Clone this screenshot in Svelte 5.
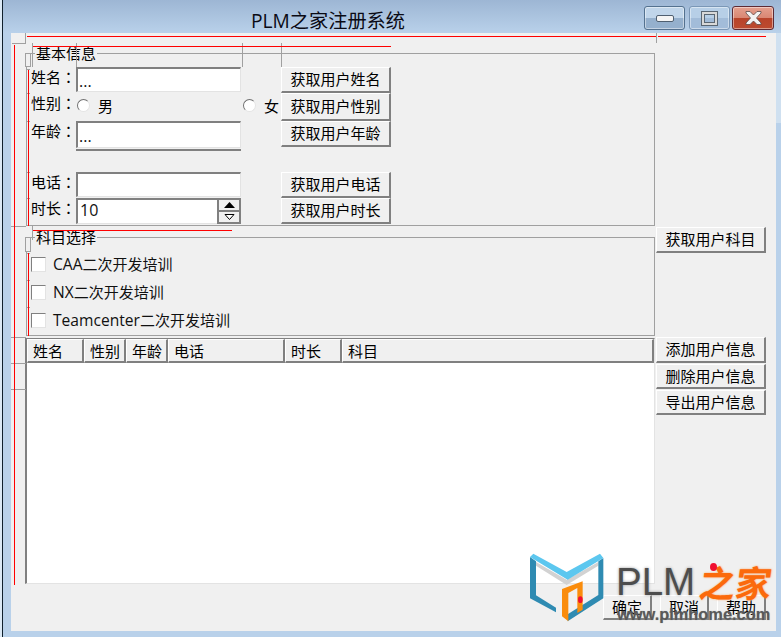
<script lang="ts">
	const nameColumns = [
		{ label: '姓名', width: 57 },
		{ label: '性别', width: 42 },
		{ label: '年龄', width: 42 },
		{ label: '电话', width: 117 },
		{ label: '时长', width: 57 },
		{ label: '科目', width: 312 }
	];
	const courses = ['CAA', 'NX', 'Teamcenter'];

	// designer annotations drawn on top of the form: [x1, y1, x2, y2]
	const redLines = [
		[27, 36.5, 656, 36.5],
		[658, 36.5, 766, 36.5],
		[33, 46.5, 391, 46.5],
		[14.5, 45, 14.5, 585],
		[28.5, 70, 28.5, 226],
		[33, 230.5, 232, 230.5],
		[28.5, 253, 28.5, 336]
	];
	const grayLines = [
		[32.5, 43, 32.5, 67],
		[76.5, 43, 76.5, 67],
		[242.5, 43, 242.5, 67],
		[281.5, 43, 281.5, 67],
		[656.5, 33, 656.5, 43],
		[32.5, 226, 32.5, 240],
		[26, 69.5, 30, 69.5],
		[26, 93.5, 30, 93.5],
		[26, 121.5, 30, 121.5],
		[26, 172.5, 30, 172.5],
		[26, 198.5, 30, 198.5],
		[26, 253.5, 30, 253.5],
		[26, 280.5, 30, 280.5],
		[26, 307.5, 30, 307.5],
		[11, 226.5, 26, 226.5],
		[11, 337.5, 26, 337.5],
		[11, 363.5, 26, 363.5],
		[11, 389.5, 26, 389.5]
	];
</script>

<div class="window">
	<header class="titlebar">
		<h1>PLM之家注册系统</h1>
		<div class="controls">
			<div class="ctl">
				<svg width="18" height="7" viewBox="0 0 18 7"><rect x="0.5" y="0.5" width="17" height="6" rx="1.5" fill="#f4f4f4" stroke="#4f5f70" /></svg>
			</div>
			<div class="ctl faded">
				<svg width="17" height="15" viewBox="0 0 17 15"><rect x="1.5" y="1.5" width="14" height="12" fill="none" stroke="#d8d8d8" stroke-width="3" /><rect x="0.5" y="0.5" width="16" height="14" fill="none" stroke="#5a6672" /><rect x="3.5" y="3.5" width="10" height="8" fill="none" stroke="#5a6672" /></svg>
			</div>
			<div class="ctl close">
				<svg width="19" height="16" viewBox="0 0 19 16"><path d="M2 1.5h4l3.5 3.5L13 1.5h4v1.5L12.5 8 17 13v1.5h-4L9.500 11 6 14.500H2V13l4.500-5L2 3z" fill="#f2f2f2" stroke="#5c4a48" stroke-width="0.8" /></svg>
			</div>
		</div>
	</header>

	<main class="client">
		<div class="body">
			<div class="left">
				<section class="group basic">
					<span class="legend">基本信息</span>
					<div class="form">
						<span class="lbl">姓名<span class="colon">：</span></span>
						<input class="field" value="..." readonly />
						<span></span>
						<button class="btn">获取用户姓名</button>

						<span class="lbl">性别<span class="colon">：</span></span>
						<label class="radio"><i></i>男</label>
						<label class="radio second"><i></i>女</label>
						<button class="btn tall">获取用户性别</button>

						<span class="lbl">年龄<span class="colon">：</span></span>
						<div class="age"><input class="field" value="..." readonly /></div>
						<span></span>
						<button class="btn">获取用户年龄</button>

						<span class="lbl">电话<span class="colon">：</span></span>
						<input class="field" readonly />
						<span></span>
						<button class="btn">获取用户电话</button>

						<span class="lbl">时长<span class="colon">：</span></span>
						<div class="spin">
							<input class="field" value="10" readonly />
							<div class="arrows">
								<b><svg width="11" height="6" viewBox="0 0 11 6"><path d="M5.500 0L11 6H0z" fill="#000" /></svg></b>
								<b><svg width="11" height="6" viewBox="0 0 11 6"><path d="M1 0.500h9L5.500 5.500z" fill="#fff" stroke="#000" /></svg></b>
							</div>
						</div>
						<span></span>
						<button class="btn">获取用户时长</button>
					</div>
				</section>

				<section class="group courses">
					<span class="legend">科目选择</span>
					{#each courses as course}
						<label class="check"><i></i><span class="check-text"><span class="latin">{course}</span>二次开发培训</span></label>
					{/each}
				</section>

				<div class="table">
					<div class="thead">
						{#each nameColumns as col}
							<div class="th" style={`width: ${col.width}px;`}>{col.label}</div>
						{/each}
					</div>
				</div>
			</div>

			<aside class="side">
				<button class="btn subject">获取用户科目</button>
				<button class="btn">添加用户信息</button>
				<button class="btn short">删除用户信息</button>
				<button class="btn short">导出用户信息</button>
			</aside>
		</div>

		<footer class="actions">
			<button class="btn">确定</button>
			<button class="btn">取消</button>
			<button class="btn">帮助</button>
		</footer>
	</main>

	<svg class="marks" width="781" height="637" viewBox="0 0 781 637" shape-rendering="crispEdges" aria-hidden="true">
		<path d="M11 33h15v10H11z" fill="#f0f0f0" />
		<path d="M11.500 43.500H25.500V33" fill="none" stroke="#a0a0a0" />
		<rect x="25.500" y="53.500" width="5" height="13" fill="#f0f0f0" stroke="#a0a0a0" />
		<rect x="25.500" y="237.500" width="5" height="14" fill="#f0f0f0" stroke="#a0a0a0" />
		{#each grayLines as [x1, y1, x2, y2]}
			<line {x1} {y1} {x2} {y2} stroke="#a0a0a0" />
		{/each}
		{#each redLines as [x1, y1, x2, y2]}
			<line {x1} {y1} {x2} {y2} stroke="#f00" />
		{/each}
	</svg>

	<div class="brand">
		<svg class="brand-mark" width="75" height="70" viewBox="90 70 225 210" aria-hidden="true">
			<path d="M108 97L200 150L295 97V108L200 166L108 108z" fill="#d2d2d2" />
			<path d="M90 82L108 95V197L168 234V248L90 206z" fill="#2f8bb2" />
			<path d="M310 85L295 95V196L203 254V275L310 206z" fill="#2f8bb2" />
			<path d="M90 82L100 72L200 127L300 72L310 85L203 150z" fill="#5cc7ef" />
			<path d="M186 178L248 155V240L232 250V175L205 190V275L186 260z" fill="#fa8c0c" />
			<ellipse cx="241" cy="210" rx="7" ry="10" fill="#f01030" />
		</svg>
		<span class="brand-plm">PLM</span>
		<span class="brand-cn">之家</span>
		<span class="brand-dot"></span>
		<span class="brand-url">www.plmhome.com</span>
	</div>
</div>

<style>
	:global(body) {
		margin: 0;
		background: #dce9f5;
	}

	* {
		box-sizing: border-box;
	}

	.window {
		position: relative;
		display: flex;
		flex-direction: column;
		width: 779px;
		height: 637px;
		margin-left: 2px;
		overflow: hidden;
		border-left: 1px solid #10202c;
		padding-bottom: 6px;
		background:
			linear-gradient(#cfe0f0, #cfe0f0) right 33px / 5px 90px no-repeat,
			linear-gradient(#9db6d4, #b9d1ea 33px);
		font-family: "Open Sans", "Noto Sans CJK SC", sans-serif;
		font-size: 15px;
		color: #000;
	}

	.titlebar {
		display: flex;
		flex: none;
		align-items: flex-start;
		justify-content: space-between;
		height: 33px;
		padding: 6px 7px 0 248px;
	}

	h1 {
		margin: 0;
		font-size: 19.2px;
		font-weight: 400;
		line-height: 29px;
		color: #0a0a14;
	}

	.controls {
		display: flex;
		gap: 3px;
	}

	.ctl {
		display: flex;
		align-items: center;
		justify-content: center;
		width: 41px;
		height: 24px;
		border: 1px solid #54718f;
		border-radius: 3px;
		background: linear-gradient(#c0d5ea 50%, #95b0cd 50%);
		box-shadow: inset 0 0 0 1px rgba(255, 255, 255, 0.45);
	}

	.ctl.faded {
		margin-left: 1px;
		border-color: #7b97b6;
		background: linear-gradient(#b7cfe7 50%, #a2bcd9 50%);
	}

	.ctl.close {
		width: 42px;
		margin-left: -1px;
		border-color: #5d2a34;
		background: linear-gradient(#e4a08f, #d98672 50%, #b8432a 50%, #bc4a30);
	}

	.client {
		flex: 1;
		margin: 0 5px 0 8px;
		padding: 20px 10px 0 15px;
		background: #f0f0f0;
	}

	.body {
		display: flex;
	}

	.left {
		width: 629px;
	}

	.group {
		position: relative;
		width: 629px;
		border: 1px solid #a0a0a0;
	}

	.legend {
		position: absolute;
		top: -11px;
		left: 8px;
		padding: 0 1px;
		background: #f0f0f0;
		line-height: 20px;
	}

	.basic {
		height: 173px;
		padding-top: 13px;
	}

	.form {
		display: grid;
		grid-template-columns: 49px 165px 40px 110px;
		grid-template-rows: 26px 28px 51px 26px 26px;
	}

	.lbl {
		padding-left: 4px;
		line-height: 20px;
		white-space: nowrap;
	}

	.colon {
		font-family: "Noto Sans CJK TC", sans-serif;
	}

	.field {
		display: block;
		width: 100%;
		height: 25px;
		border-style: solid;
		border-width: 2px 1px 1px 2px;
		border-color: #808080 #e3e3e3 #e3e3e3 #808080;
		border-radius: 0;
		outline: none;
		padding: 2px 0 0 1px;
		background: #fff;
		font: 16px "Open Sans", sans-serif;
		color: #111;
	}

	.age {
		height: 30px;
		border-bottom: 2px solid #808080;
	}

	.age .field {
		height: 27px;
	}

	.radio {
		display: flex;
		align-items: center;
		gap: 8px;
		height: 25px;
		padding-left: 1px;
	}

	.radio.second {
		padding-left: 2px;
	}

	.radio i {
		flex: none;
		width: 13px;
		height: 13px;
		border: 1px solid;
		border-color: #707070 #e4e4e4 #e4e4e4 #707070;
		border-radius: 50%;
		background: #fff;
	}

	.btn {
		display: block;
		width: 110px;
		height: 26px;
		border-style: solid;
		border-width: 1px 2px 2px 1px;
		border-color: #fff #808080 #808080 #fff;
		padding: 0 0 3px;
		background: #f0f0f0;
		font: inherit;
		color: #000;
	}

	.btn.tall {
		height: 28px;
	}

	.btn.short {
		height: 25px;
		margin-top: 1px;
		padding-bottom: 4px;
	}

	.spin {
		position: relative;
		display: flex;
		height: 26px;
	}

	.spin .field {
		height: 26px;
		padding: 0 0 3px 2px;
	}

	.arrows {
		position: absolute;
		top: 0;
		right: 0;
		display: flex;
		flex-direction: column;
		gap: 2px;
		width: 24px;
		height: 26px;
		border: 2px solid #808080;
		background: #808080;
	}

	.arrows b {
		display: flex;
		flex: 1;
		align-items: center;
		justify-content: center;
		background: #f0f0f0;
	}

	.courses {
		height: 99px;
		margin-top: 11px;
		padding-top: 12px;
	}

	.check {
		display: flex;
		align-items: center;
		gap: 7px;
		height: 28px;
		padding-left: 4px;
		color: #111;
	}

	.check-text {
		margin-bottom: 1px;
	}

	.latin {
		font-size: 15.6px;
	}

	.check i {
		flex: none;
		width: 15px;
		height: 15px;
		border: 1px solid;
		border-color: #808080 #e3e3e3 #e3e3e3 #808080;
		background: #fff;
	}

	.table {
		width: 630px;
		height: 246px;
		margin: 2px 0 0 -1px;
		overflow: hidden;
		border-style: solid;
		border-width: 1px 1px 1px 2px;
		border-color: #808080 #e3e3e3 #e3e3e3 #808080;
		background: #fff;
	}

	.thead {
		display: flex;
		height: 24px;
		background: #f0f0f0;
	}

	.th {
		flex: none;
		height: 24px;
		border-style: solid;
		border-width: 1px 2px 2px 1px;
		border-color: #fff #808080 #808080 #fff;
		padding-left: 5px;
		line-height: 23px;
	}

	.side {
		display: flex;
		flex-direction: column;
		width: 110px;
		margin-left: 1px;
		padding-top: 174px;
	}

	.side .subject {
		margin-bottom: 84px;
	}

	.actions {
		display: flex;
		justify-content: flex-end;
		gap: 8px;
		margin-top: 11px;
	}

	.actions .btn {
		width: 49px;
		height: 25px;
	}

	.marks {
		position: absolute;
		top: 0;
		left: -3px;
		pointer-events: none;
	}

	.brand {
		position: absolute;
		top: 0;
		left: -3px;
		width: 781px;
		height: 637px;
		pointer-events: none;
	}

	.brand-mark {
		position: absolute;
		top: 553px;
		left: 530px;
	}

	.brand-plm {
		position: absolute;
		top: 559px;
		left: 616px;
		font: 38.5px/46px "Liberation Sans", sans-serif;
		color: #4d4d4d;
		text-shadow: 0 0 3px #999;
	}

	.brand-cn {
		position: absolute;
		top: 559px;
		left: 700px;
		font: 700 36px/44px "Noto Sans CJK SC", sans-serif;
		color: #fb6a0c;
		text-shadow: 0 0 2px #fb9a50;
		transform: skewX(-8deg);
	}

	.brand-dot {
		position: absolute;
		top: 563px;
		left: 710px;
		width: 7px;
		height: 8px;
		border-radius: 50%;
		background: #f01030;
	}

	.brand-url {
		position: absolute;
		top: 603px;
		left: 617px;
		font: 700 16.4px/22px "Liberation Sans", sans-serif;
		color: rgba(80, 80, 80, 0.9);
		text-shadow: 0 0 1px #999;
		white-space: nowrap;
	}
</style>
